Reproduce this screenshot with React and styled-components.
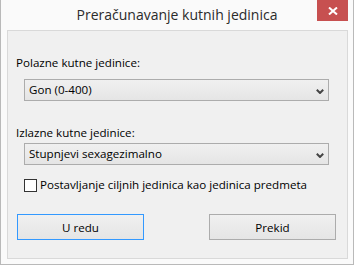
import React from "react";
import styled, { createGlobalStyle } from "styled-components";

const GlobalStyle = createGlobalStyle`
  body {
    margin: 0;
    background: #ffffff;
    font-family: "Open Sans", "Liberation Sans", sans-serif;
  }
`;

function Chevron() {
    return (
        <svg width="8" height="5" viewBox="0 0 8 5">
            <path d="M0.8 0.8 L4 4 L7.2 0.8" fill="none" stroke="#444444" strokeWidth="2" />
        </svg>
    );
}

function CloseIcon() {
    return (
        <svg width="10" height="8" viewBox="0 0 10 8">
            <path d="M1 0.5 L9 7.5 M9 0.5 L1 7.5" stroke="#ffffff" strokeWidth="2" />
        </svg>
    );
}

function Dropdown({ value, top }) {
    return (
        <Combo $top={top}>
            <ComboText>{value}</ComboText>
            <ChevronBox>
                <Chevron />
            </ChevronBox>
        </Combo>
    );
}

function App() {
    return (
        <>
            <GlobalStyle />
            <Window>
                <TitleBar>
                    <Title>Preračunavanje kutnih jedinica</Title>
                    <CloseBtn>
                        <CloseIcon />
                    </CloseBtn>
                </TitleBar>
                <Panel>
                    <Label $top={24}>Polazne kutne jedinice:</Label>
                    <Dropdown value="Gon (0-400)" top={8} />
                    <Label $top={24}>Izlazne kutne jedinice:</Label>
                    <Dropdown value="Stupnjevi sexagezimalno" top={2} />
                    <CheckRow>
                        <CheckBox />
                        <CheckText>Postavljanje ciljnih jedinica kao jedinica predmeta</CheckText>
                    </CheckRow>
                    <BtnGroup>
                        <Button $primary>U redu</Button>
                        <Button>Prekid</Button>
                    </BtnGroup>
                </Panel>
            </Window>
        </>
    );
}

const Window = styled.div`
    box-sizing: border-box;
    width: 354px;
    height: 265px;
    background: #fafafa;
    border: 1px solid #b9b9b9;
    border-top: none;
    display: flex;
    flex-direction: column;
`;

const TitleBar = styled.div`
    height: 30px;
    display: grid;
    grid-template-columns: 1fr auto 1fr;
    align-items: start;
`;

const Title = styled.div`
    grid-column: 2;
    font-size: 14px;
    line-height: 30px;
    color: #2b2b2b;
    white-space: nowrap;
`;

const CloseBtn = styled.div`
    grid-column: 3;
    justify-self: end;
    margin-right: 5px;
    width: 31px;
    height: 21px;
    background: #c75050;
    display: flex;
    align-items: center;
    justify-content: center;
`;

const Panel = styled.div`
    box-sizing: border-box;
    width: 341px;
    height: 229px;
    margin-left: 6px;
    background: #f0f0f0;
    border: 1px solid #d9d9d9;
    padding: 0 8px;
    display: flex;
    flex-direction: column;
    font-size: 11.6px;
    color: #000000;
`;

const Label = styled.div`
    margin-top: ${(p) => p.$top}px;
    line-height: 16px;
    white-space: nowrap;
`;

const Combo = styled.div`
    box-sizing: border-box;
    margin-top: ${(p) => p.$top}px;
    margin-left: 8px;
    width: 305px;
    height: 22px;
    border: 1px solid #acacac;
    background: linear-gradient(#f0f0f0, #e5e5e5);
    display: flex;
    align-items: center;
    padding: 0 4px;
`;

const ComboText = styled.span`
    flex: 1;
    line-height: 16px;
    white-space: nowrap;
`;

const ChevronBox = styled.span`
    display: flex;
    margin-top: 2px;
`;

const CheckRow = styled.div`
    margin-top: 12px;
    margin-left: 8px;
    display: flex;
    align-items: center;
    gap: 3px;
    line-height: 16px;
    height: 16px;
`;

const CheckBox = styled.span`
    box-sizing: border-box;
    width: 13px;
    height: 13px;
    border: 1px solid #333333;
    background: #ffffff;
`;

const CheckText = styled.span`
    white-space: nowrap;
`;

const BtnGroup = styled.div`
    margin-top: 21px;
    margin-left: 1px;
    display: flex;
    gap: 65px;
`;

const Button = styled.div`
    box-sizing: border-box;
    width: 127px;
    height: 26px;
    border: 1px solid ${(p) => (p.$primary ? "#3399ff" : "#acacac")};
    background: linear-gradient(#f0f0f0, #e5e5e5);
    display: flex;
    align-items: center;
    justify-content: center;
    color: #000000;
`;

export default App;
